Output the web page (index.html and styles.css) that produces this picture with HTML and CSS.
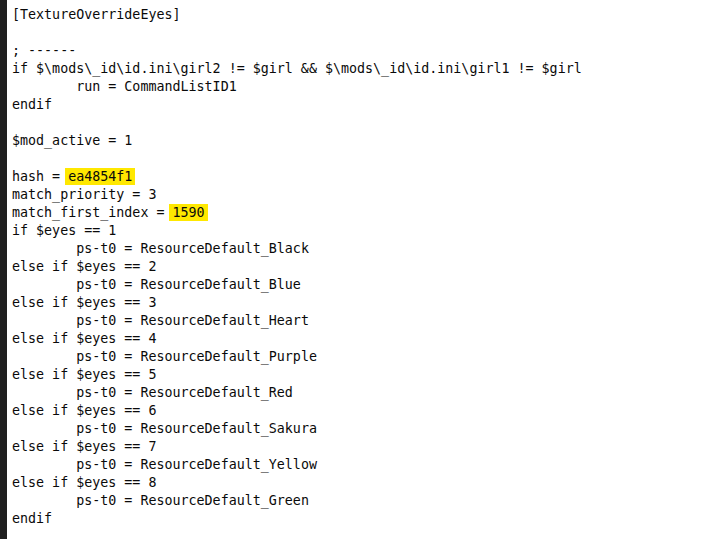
FILE: index.html
```html
<!DOCTYPE html>
<html>
<head>
<meta charset="utf-8">
<link rel="stylesheet" href="styles.css">
</head>
<body>
<div class="editor">
<pre class="code">[TextureOverrideEyes]

; ------
if $\mods\_id\id.ini\girl2 != $girl &amp;&amp; $\mods\_id\id.ini\girl1 != $girl
	run = CommandListID1
endif

$mod_active = 1

hash = <mark class="hl">ea4854f1</mark>
match_priority = 3
match_first_index = <mark class="hl">1590</mark>
if $eyes == 1
	ps-t0 = ResourceDefault_Black
else if $eyes == 2
	ps-t0 = ResourceDefault_Blue
else if $eyes == 3
	ps-t0 = ResourceDefault_Heart
else if $eyes == 4
	ps-t0 = ResourceDefault_Purple
else if $eyes == 5
	ps-t0 = ResourceDefault_Red
else if $eyes == 6
	ps-t0 = ResourceDefault_Sakura
else if $eyes == 7
	ps-t0 = ResourceDefault_Yellow
else if $eyes == 8
	ps-t0 = ResourceDefault_Green
endif</pre>
</div>
</body>
</html>
```
FILE: styles.css
```css
html, body {
  margin: 0;
  padding: 0;
  background: #ffffff;
  width: 714px;
  height: 539px;
  overflow: hidden;
}
.editor {
  height: 539px;
  border-left: 7px solid #1f1f1f;
  padding: 6px 0 0 5px;
  box-sizing: border-box;
}
.code {
  margin: 0;
  font-family: "DejaVu Sans Mono", "Liberation Mono", monospace;
  font-size: 13.33px;
  line-height: 18px;
  color: #0a0a0a;
  tab-size: 8;
  white-space: pre;
}
.hl {
  background: #ffe800;
  color: inherit;
  padding: 1px 0;
  box-shadow: -3px 0 0 #ffe800, 3px 0 0 #ffe800;
}
```
